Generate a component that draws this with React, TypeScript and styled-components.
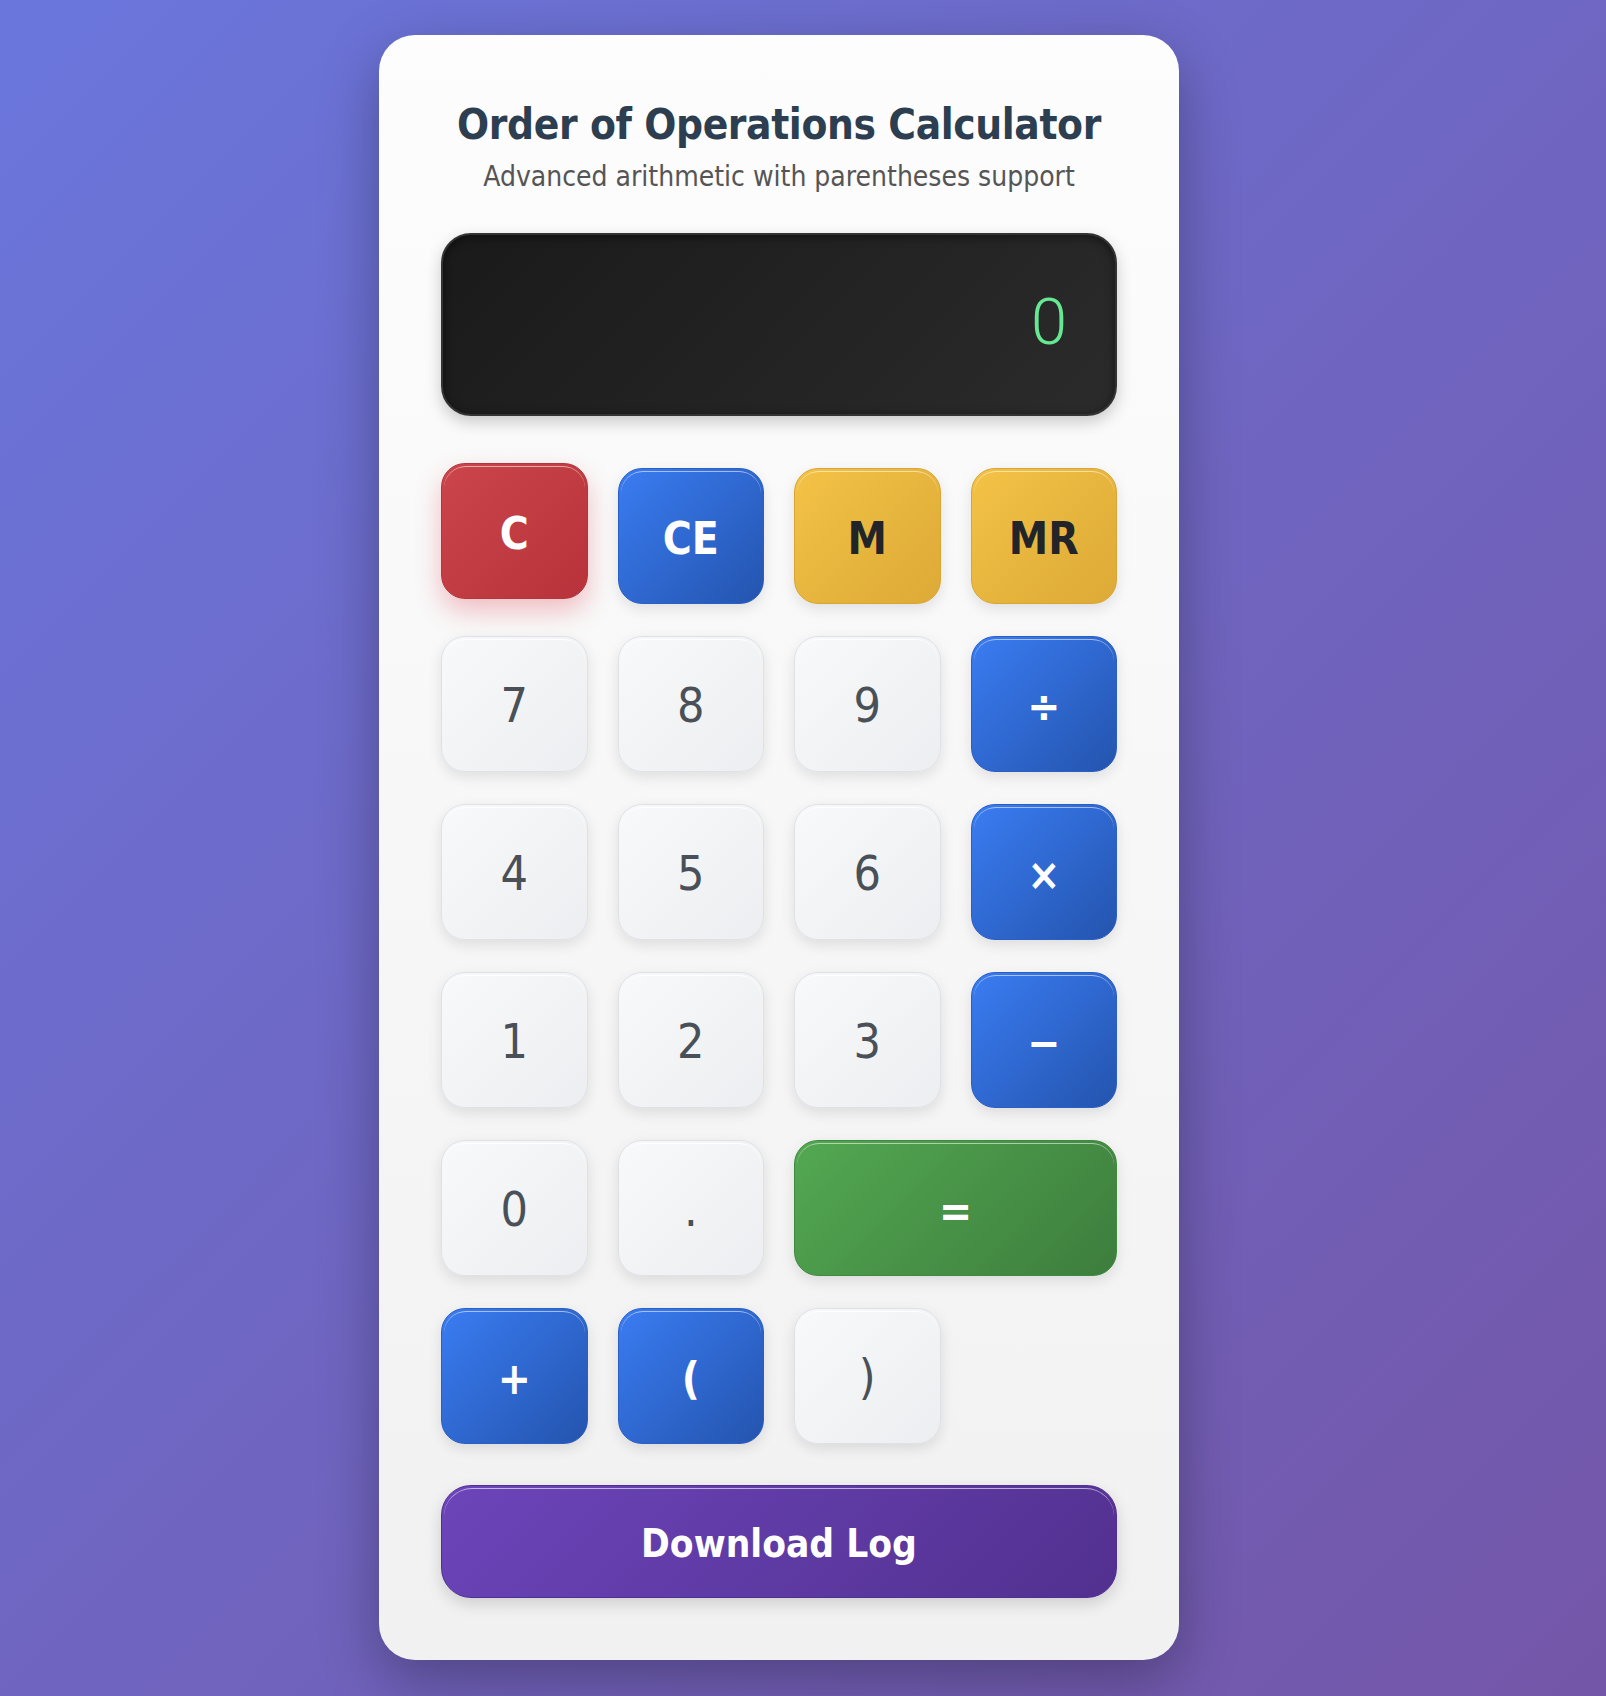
import React, { useState } from 'react';
import styled, { createGlobalStyle, css } from 'styled-components';

type KeyVariant = 'num' | 'op' | 'clear' | 'mem' | 'equals';

interface KeyDef {
    label: string;
    variant: KeyVariant;
    span?: number;
}

const KEYS: KeyDef[] = [
    { label: 'C', variant: 'clear' },
    { label: 'CE', variant: 'op' },
    { label: 'M', variant: 'mem' },
    { label: 'MR', variant: 'mem' },
    { label: '7', variant: 'num' },
    { label: '8', variant: 'num' },
    { label: '9', variant: 'num' },
    { label: '÷', variant: 'op' },
    { label: '4', variant: 'num' },
    { label: '5', variant: 'num' },
    { label: '6', variant: 'num' },
    { label: '×', variant: 'op' },
    { label: '1', variant: 'num' },
    { label: '2', variant: 'num' },
    { label: '3', variant: 'num' },
    { label: '−', variant: 'op' },
    { label: '0', variant: 'num' },
    { label: '.', variant: 'num' },
    { label: '=', variant: 'equals', span: 2 },
    { label: '+', variant: 'op' },
    { label: '(', variant: 'op' },
    { label: ')', variant: 'num' },
];

const FONT = '"DejaVu Sans Condensed", "DejaVu Sans", Tahoma, sans-serif';

export default function App() {
    const [display] = useState('0');

    return (
        <>
            <GlobalStyle />
            <Page>
                <Card>
                    <Header>
                        <Title>Order of Operations Calculator</Title>
                        <Subtitle>Advanced arithmetic with parentheses support</Subtitle>
                    </Header>
                    <Display>
                        <DisplayValue>{display}</DisplayValue>
                    </Display>
                    <Keypad>
                        {KEYS.map((k) => (
                            <Key key={k.label} $variant={k.variant} $span={k.span} $lifted={k.label === 'C'}>
                                {k.label}
                            </Key>
                        ))}
                    </Keypad>
                    <DownloadButton>Download Log</DownloadButton>
                </Card>
            </Page>
        </>
    );
}

const GlobalStyle = createGlobalStyle`
    html, body {
        margin: 0;
        padding: 0;
    }
    body {
        min-height: 100vh;
        background: linear-gradient(135deg, #6a76dc 0%, #7456a8 100%);
        font-family: ${FONT};
    }
`;

const Page = styled.div`
    display: flex;
    justify-content: center;
    padding: 35px 48px 36px 0;
`;

const Card = styled.div`
    width: 800px;
    box-sizing: border-box;
    padding: 63px 62px 62px;
    border-radius: 36px;
    background: linear-gradient(180deg, #fdfdfd 0%, #f1f1f1 100%);
    box-shadow: 0 20px 60px rgba(0, 0, 0, 0.3);
`;

const Header = styled.div`
    text-align: center;
`;

const Title = styled.h1`
    margin: 0 0 10px;
    font-size: 42px;
    line-height: 53px;
    font-weight: 700;
    letter-spacing: -0.4px;
    white-space: nowrap;
    color: #2c3e50;
`;

const Subtitle = styled.p`
    margin: 0;
    font-size: 28px;
    line-height: 32px;
    color: #555;
`;

const Display = styled.div`
    margin-top: 40px;
    height: 183px;
    box-sizing: border-box;
    display: flex;
    align-items: center;
    justify-content: flex-end;
    padding: 0 48px 4px;
    border: 2px solid #333;
    border-radius: 30px;
    background: linear-gradient(135deg, #1a1a1a 0%, #2b2b2b 100%);
    box-shadow: inset 0 2px 10px rgba(0, 0, 0, 0.5), 0 6px 16px rgba(0, 0, 0, 0.2);
`;

const DisplayValue = styled.span`
    font-family: Roboto, "Open Sans", sans-serif;
    font-weight: 300;
    font-size: 65px;
    line-height: 1;
    color: #66e892;
`;

const Keypad = styled.div`
    margin-top: 52px;
    display: grid;
    grid-template-columns: repeat(4, 1fr);
    grid-auto-rows: 136px;
    column-gap: 30px;
    row-gap: 32px;
`;

const boldLabel = css`
    font-weight: 700;
    font-size: 44px;
    padding-top: 6px;
`;

const variants: Record<KeyVariant, ReturnType<typeof css>> = {
    num: css`
        background: linear-gradient(135deg, #f8f9fa 0%, #eceef1 100%);
        border-color: #dee2e6;
        color: #495057;
        font-weight: 400;
        font-size: 48px;
        padding-top: 2px;
        &::before {
            border-top-color: rgba(255, 255, 255, 0.9);
        }
    `,
    op: css`
        background: linear-gradient(135deg, #3a7cf2 0%, #2454ae 100%);
        border-color: #2a5fc4;
        color: #fff;
        ${boldLabel}
    `,
    clear: css`
        background: linear-gradient(135deg, #cb454b 0%, #b7323a 100%);
        border-color: #b6353b;
        color: #fff;
        ${boldLabel}
    `,
    mem: css`
        background: linear-gradient(135deg, #f3c246 0%, #dcaa36 100%);
        border-color: #d7a635;
        color: #212529;
        ${boldLabel}
    `,
    equals: css`
        background: linear-gradient(135deg, #53a852 0%, #3d7d3d 100%);
        border-color: #3f8a3f;
        color: #fff;
        ${boldLabel}
    `,
};

const Key = styled.button<{ $variant: KeyVariant; $span?: number; $lifted?: boolean }>`
    position: relative;
    grid-column: span ${(p) => p.$span ?? 1};
    display: flex;
    align-items: center;
    justify-content: center;
    padding: 0;
    border: 1px solid transparent;
    border-radius: 24px;
    font-family: ${FONT};
    line-height: 1;
    cursor: pointer;
    box-shadow: 0 5px 14px rgba(0, 0, 0, 0.1);
    &::before {
        content: '';
        position: absolute;
        inset: 2px;
        border-radius: 22px;
        border-top: 1.5px solid rgba(255, 255, 255, 0.55);
        pointer-events: none;
    }
    ${(p) => variants[p.$variant]}
    ${(p) =>
        p.$lifted &&
        css`
            transform: translateY(-5px);
            box-shadow: 0 12px 26px rgba(220, 53, 69, 0.3);
        `}
`;

const DownloadButton = styled.button`
    position: relative;
    display: block;
    margin-top: 41px;
    width: 100%;
    height: 113px;
    padding: 4px 0 0;
    border: 1px solid #4f2f94;
    border-radius: 30px;
    background: linear-gradient(135deg, #6c45ba 0%, #52308f 100%);
    color: #fff;
    font-family: ${FONT};
    font-size: 38.5px;
    font-weight: 700;
    cursor: pointer;
    box-shadow: 0 6px 16px rgba(0, 0, 0, 0.15);
    &::before {
        content: '';
        position: absolute;
        inset: 2px;
        border-radius: 28px;
        border-top: 1.5px solid rgba(255, 255, 255, 0.6);
        pointer-events: none;
    }
`;
